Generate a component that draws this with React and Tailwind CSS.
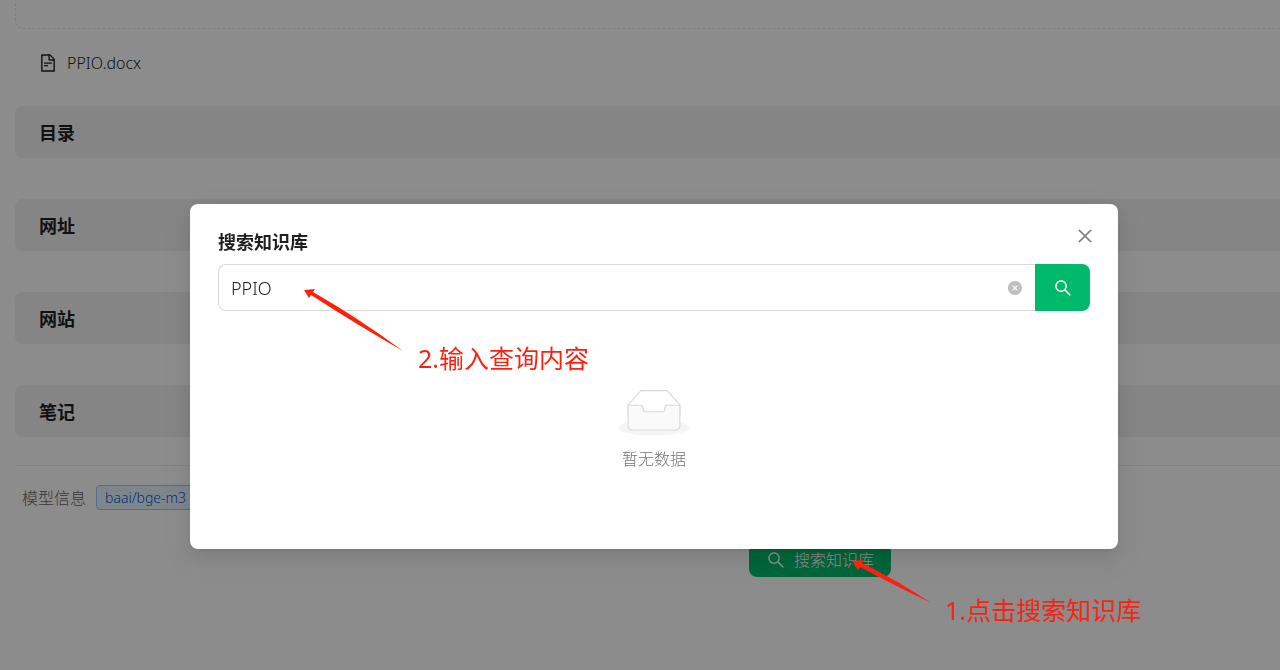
import { useState } from "react";
import {
    AiFillCloseCircle,
    AiOutlineClose,
    AiOutlineFileText,
    AiOutlineSearch,
} from "react-icons/ai";

const sections = ["目录", "网址", "网站", "笔记"];

function EmptyBox() {
    return (
        <svg width="72" height="47" viewBox="0 0 64 41" aria-hidden="true">
            <g transform="translate(0 1)" fill="none" fillRule="evenodd">
                <ellipse fill="#f5f5f5" cx="32" cy="33" rx="32" ry="7" />
                <g fillRule="nonzero" stroke="#d9d9d9">
                    <path d="M55 12.76L44.854 1.258C44.367.474 43.656 0 42.907 0H21.093c-.749 0-1.46.474-1.947 1.257L9 12.761V22h46v-9.24z" />
                    <path
                        d="M41.613 15.931c0-1.605.994-2.93 2.227-2.931H55v18.137C55 33.26 53.68 35 52.05 35h-40.1C10.32 35 9 33.259 9 31.137V13h11.16c1.233 0 2.227 1.323 2.227 2.928v.022c0 1.605 1.005 2.901 2.237 2.901h14.752c1.232 0 2.237-1.308 2.237-2.913v-.007z"
                        fill="#fafafa"
                    />
                </g>
            </g>
        </svg>
    );
}

function KnowledgePage() {
    return (
        <div className="overflow-hidden">
            {/* The page is wider than the window and runs off its right side */}
            <main className="ml-[15px] -mr-[345px]">
                <div className="h-[29px] rounded-b-lg border border-t-0 border-dashed border-[#e4e4e4]" />

                <div className="flex items-center gap-[9px] px-[23px] pt-[21px] pb-[30px]">
                    <AiOutlineFileText className="h-5 w-5 text-[#1f1f1f]" />
                    <a href="#file" className="text-base leading-[26px] font-light text-[#1f1f1f]">
                        PPIO.docx
                    </a>
                </div>

                <div className="flex flex-col gap-[41px]">
                    {sections.map((name) => (
                        <section key={name} className="rounded-lg bg-[#f2f2f2] px-6 pt-[13px] pb-[11px]">
                            <h2 className="text-lg leading-7 font-bold text-[#1f1f1f]">{name}</h2>
                        </section>
                    ))}
                </div>

                <div className="mt-7 flex items-center gap-2.5 border-t border-[#ececec] px-[7px] pt-[19px]">
                    <span className="text-base leading-6 font-light text-[#666]">模型信息</span>
                    <span className="rounded border border-[#91caff] bg-[#e6f4ff] px-2 text-sm leading-[23px] font-light text-[#0958d9]">
                        baai/bge-m3
                    </span>
                </div>

                <div className="mt-[33px] flex justify-center pb-6">
                    <button
                        type="button"
                        className="flex h-[34px] items-center gap-2 rounded-lg bg-[#00b96b] px-[17px] text-base font-light text-white"
                    >
                        <AiOutlineSearch className="h-5 w-5" />
                        搜索知识库
                    </button>
                </div>
            </main>
        </div>
    );
}

function SearchDialog() {
    const [keyword, setKeyword] = useState("PPIO");

    return (
        <div className="fixed inset-0 flex items-start justify-center bg-black/45 pt-[204px] pl-7">
            <div
                role="dialog"
                aria-labelledby="dialog-title"
                className="w-full max-w-[928px] rounded-lg bg-white px-7 pt-6 pb-[78px] shadow-[0_7px_18px_0_rgba(0,0,0,0.08),0_3px_7px_-4px_rgba(0,0,0,0.12),0_10px_32px_9px_rgba(0,0,0,0.05)]"
            >
                <div className="flex h-7 items-center justify-between">
                    <h1 id="dialog-title" className="text-lg leading-7 font-bold text-[#1f1f1f]">
                        搜索知识库
                    </h1>
                    <button type="button" aria-label="关闭" className="-mt-3 -mr-[9px] p-1 text-[#808080]">
                        <AiOutlineClose className="h-5 w-5" />
                    </button>
                </div>

                <form className="mt-2 flex h-[47px]" onSubmit={(e) => e.preventDefault()}>
                    <div className="flex flex-1 items-center rounded-l-lg border border-r-0 border-[#d9d9d9] px-3">
                        <input
                            type="text"
                            aria-label="搜索知识库"
                            value={keyword}
                            onChange={(e) => setKeyword(e.target.value)}
                            className="min-w-0 flex-1 text-lg font-light text-[#1f1f1f] outline-none"
                        />
                        <button type="button" aria-label="清除" onClick={() => setKeyword("")}>
                            <AiFillCloseCircle className="h-4 w-4 text-[#bfbfbf]" />
                        </button>
                    </div>
                    <button
                        type="submit"
                        aria-label="搜索"
                        className="flex w-[55px] items-center justify-center rounded-r-lg bg-[#00b96b] text-white"
                    >
                        <AiOutlineSearch className="h-5 w-5" />
                    </button>
                </form>

                <div className="mt-[78px] flex flex-col items-center gap-[11px]">
                    <EmptyBox />
                    <p className="text-base leading-6 font-light text-[#737373]">暂无数据</p>
                </div>
            </div>
        </div>
    );
}

// Red callouts drawn over the page and the dialog
function Callouts() {
    return (
        <div className="pointer-events-none absolute inset-0 text-[25px] leading-8 text-[#ff1f0f]">
            <svg className="absolute top-[288px] left-[304px]" width="100" height="64" fill="currentColor">
                <path d="M0 2L11 1L9 4Q56 31 99 63Q50 35 7 7L5 10Z" />
            </svg>
            <p className="absolute top-[342px] left-[418px] whitespace-nowrap">2.输入查询内容</p>
            <svg className="absolute top-[560px] left-[852px]" width="80" height="44" fill="currentColor">
                <path d="M0 1L11 0L10 3Q48 22 79 43Q40 24 8 7L6 10Z" />
            </svg>
            <p className="absolute top-[594px] left-[945px] whitespace-nowrap">1.点击搜索知识库</p>
        </div>
    );
}

function App() {
    return (
        <div className="relative min-h-screen bg-white font-['Noto_Sans','Noto_Sans_CJK_SC',sans-serif]">
            <KnowledgePage />
            <SearchDialog />
            <Callouts />
        </div>
    );
}

export default App;
